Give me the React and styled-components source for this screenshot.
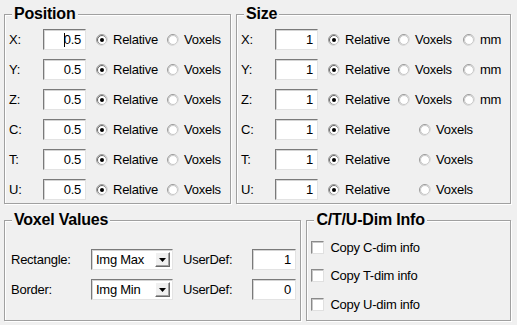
import React from 'react';
import styled, { createGlobalStyle } from 'styled-components';

const Global = createGlobalStyle`
  html, body { margin: 0; padding: 0; background: #f0f0f0; }
  body {
    font-family: "Liberation Sans", Arial, sans-serif;
    font-size: 13px;
    letter-spacing: -0.25px;
    color: #000;
  }
`;

const Page = styled.div`
  width: 517px;
  height: 325px;
  box-sizing: border-box;
  padding: 5px 6px 0 4px;
  display: flex;
  flex-direction: column;
  gap: 7px;
`;

const Band = styled.div`
  display: flex;
  gap: 5px;
`;

const Group = styled.fieldset`
  margin: 0;
  min-width: 0;
  box-sizing: border-box;
  width: ${p => p.$w}px;
  height: ${p => p.$h}px;
  border: 1px solid #a0a0a0;
  box-shadow: inset 1px 1px 0 #fff, 1px 1px 0 #fff;
  padding: ${p => p.$pad};
`;

const Legend = styled.legend`
  font-size: 16px;
  font-weight: bold;
  line-height: 18px;
  letter-spacing: -0.2px;
  padding: 0 2px;
  margin-left: ${p => p.$ml}px;
  background: #f0f0f0;
`;

const Rows = styled.div`
  display: flex;
  flex-direction: column;
  gap: ${p => p.$gap}px;
`;

const Row = styled.div`
  display: flex;
  align-items: center;
  height: ${p => p.$h}px;
`;

const Label = styled.span`
  flex: none;
  width: ${p => p.$w}px;
  white-space: nowrap;
`;

const Field = styled.div`
  flex: none;
  box-sizing: border-box;
  width: ${p => p.$w}px;
  height: ${p => p.$h}px;
  background: #fff;
  border: 1px solid;
  border-color: #7a7a7a #e3e3e3 #e3e3e3 #7a7a7a;
  box-shadow: inset 1px 1px 0 #d4d4d4;
  display: flex;
  align-items: center;
  justify-content: flex-end;
  padding-right: 4px;
  margin-right: ${p => p.$mr || 0}px;
`;

const Caret = styled.span`
  display: inline-block;
  width: 1px;
  height: 14px;
  background: #000;
  margin-right: -1px;
`;

const Option = styled.span`
  flex: none;
  display: inline-flex;
  align-items: center;
  gap: 5px;
  width: ${p => (p.$w ? `${p.$w}px` : 'auto')};
  white-space: nowrap;
`;

const Select = styled.div`
  flex: none;
  box-sizing: border-box;
  width: 82px;
  height: 21px;
  background: #fff;
  border: 1px solid;
  border-color: #7a7a7a #e3e3e3 #e3e3e3 #7a7a7a;
  box-shadow: inset 1px 1px 0 #d4d4d4;
  display: flex;
  align-items: center;
  justify-content: space-between;
  padding: 0 2px 0 4px;
  margin-right: 10px;
`;

const ArrowButton = styled.span`
  box-sizing: border-box;
  width: 15px;
  height: 15px;
  background: #f0f0f0;
  border: 1px solid;
  border-color: #fff #696969 #696969 #fff;
  box-shadow: inset -1px -1px 0 #a0a0a0;
  display: flex;
  align-items: center;
  justify-content: center;
`;

const Check = styled.span`
  flex: none;
  box-sizing: border-box;
  width: 13px;
  height: 13px;
  background: #fff;
  border: 1px solid;
  border-color: #8a8a8a #e0e0e0 #e0e0e0 #8a8a8a;
  box-shadow: inset 1px 1px 0 #c8c8c8;
`;

const CheckRow = styled.div`
  display: flex;
  align-items: center;
  gap: 6px;
  height: 16px;
`;

const Radio = ({ checked }) => (
  <svg width="12" height="12" viewBox="0 0 12 12">
    <defs>
      <linearGradient id="rg" x1="0" y1="0" x2="1" y2="1">
        <stop offset="0" stopColor="#7a7a7a" />
        <stop offset="1" stopColor="#ffffff" />
      </linearGradient>
      <linearGradient id="rg2" x1="0" y1="0" x2="1" y2="1">
        <stop offset="0" stopColor="#404040" />
        <stop offset="1" stopColor="#dcdcdc" />
      </linearGradient>
    </defs>
    <circle cx="6" cy="6" r="5.5" fill="none" stroke="url(#rg)" strokeWidth="1" />
    <circle cx="6" cy="6" r="4.5" fill="#fff" stroke={checked ? 'url(#rg2)' : '#c8c8c8'} strokeWidth="1" />
    {checked && <circle cx="6" cy="6" r="2" fill="#000" />}
  </svg>
);

const Arrow = () => (
  <svg width="7" height="4" viewBox="0 0 7 4">
    <path d="M0 0h7L3.5 4z" fill="#000" />
  </svg>
);

const posRows = ['X', 'Y', 'Z', 'C', 'T', 'U'];

export default function App() {
  return (
    <>
      <Global />
      <Page>
        <Band>
          <Group $w={227} $h={199} $pad="6px 4px 0 4px">
            <Legend $ml={3}>Position</Legend>
            <Rows $gap={9}>
              {posRows.map((k, i) => (
                <Row key={k} $h={21}>
                  <Label $w={34}>{k}:</Label>
                  <Field $w={43} $h={21} $mr={10}>
                    {i === 0 && <Caret />}0.5
                  </Field>
                  <Option $w={71}><Radio checked />Relative</Option>
                  <Option><Radio />Voxels</Option>
                </Row>
              ))}
            </Rows>
          </Group>
          <Group $w={275} $h={199} $pad="6px 4px 0 4px">
            <Legend $ml={3}>Size</Legend>
            <Rows $gap={9}>
              {posRows.map((k, i) => (
                <Row key={k} $h={21}>
                  <Label $w={34}>{k}:</Label>
                  <Field $w={43} $h={21} $mr={10}>1</Field>
                  <Option $w={i < 3 ? 70 : 91}><Radio checked />Relative</Option>
                  <Option $w={i < 3 ? 65 : undefined}><Radio />Voxels</Option>
                  {i < 3 && <Option><Radio />mm</Option>}
                </Row>
              ))}
            </Rows>
          </Group>
        </Band>
        <Band>
          <Group $w={298} $h={110} $pad="20px 6px 0 6px">
            <Legend $ml={1}>Voxel Values</Legend>
            <Rows $gap={9}>
              <Row $h={21}>
                <Label $w={80}>Rectangle:</Label>
                <Select>Img Max<ArrowButton><Arrow /></ArrowButton></Select>
                <Label $w={69}>UserDef:</Label>
                <Field $w={44} $h={21}>1</Field>
              </Row>
              <Row $h={21}>
                <Label $w={80}>Border:</Label>
                <Select>Img Min<ArrowButton><Arrow /></ArrowButton></Select>
                <Label $w={69}>UserDef:</Label>
                <Field $w={44} $h={21}>0</Field>
              </Row>
            </Rows>
          </Group>
          <Group $w={205} $h={110} $pad="10px 4px 0 4px">
            <Legend $ml={3}>C/T/U-Dim Info</Legend>
            <Rows $gap={12.5}>
              <CheckRow><Check />Copy C-dim info</CheckRow>
              <CheckRow><Check />Copy T-dim info</CheckRow>
              <CheckRow><Check />Copy U-dim info</CheckRow>
            </Rows>
          </Group>
        </Band>
      </Page>
    </>
  );
}
